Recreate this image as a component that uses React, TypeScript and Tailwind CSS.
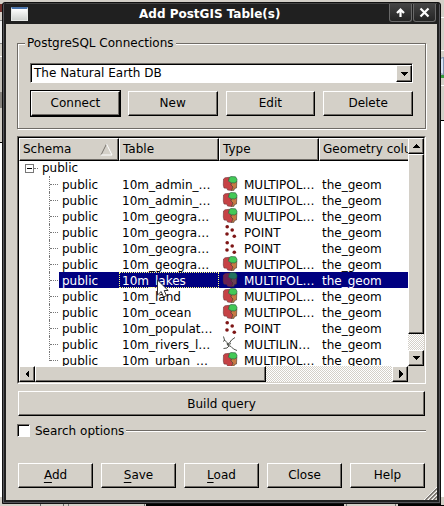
import React from "react";
import type { ReactNode } from "react";

const raised =
  "border border-t-white border-l-white border-r-black border-b-black shadow-[inset_-1px_-1px_0_#6f6b66]";
const dither =
  "bg-[repeating-conic-gradient(#d4d0c8_0%_25%,#ffffff_0%_50%)] bg-[length:2px_2px]";

function Button({ children, className = "" }: { children: ReactNode; className?: string }) {
  return (
    <button className={`flex items-center justify-center bg-[#d4d0c8] ${raised} ${className}`}>
      <span>{children}</span>
    </button>
  );
}

function Mnemonic({ label }: { label: string }) {
  return (
    <>
      <span className="underline decoration-1 underline-offset-[3px]">{label[0]}</span>
      {label.slice(1)}
    </>
  );
}

function Arrow({ dir }: { dir: "up" | "down" | "left" | "right" }) {
  const points = {
    up: "2,8 10,8 6,4",
    down: "2,4 10,4 6,8",
    left: "8,2 8,10 4,6",
    right: "5,2 5,10 9,6",
  }[dir];
  return (
    <svg width="12" height="12" viewBox="0 0 12 12" shapeRendering="crispEdges">
      <polygon points={points} />
    </svg>
  );
}

function ScrollButton({ dir }: { dir: "up" | "down" | "left" | "right" }) {
  return (
    <div className={`flex size-4 shrink-0 items-center justify-center bg-[#d4d0c8] ${raised}`}>
      <Arrow dir={dir} />
    </div>
  );
}

function PolygonIcon({ selected }: { selected: boolean }) {
  const red = selected ? "#6b2052" : "#c64245";
  const green = selected ? "#237360" : "#43c957";
  const brown = selected ? "#6b4056" : "#c77a43";
  return (
    <svg width="16" height="16" viewBox="0 0 16 16">
      <path d="M1.500 3 3 1.800 7.500 1.300 6.500 5.200 9.500 6.800 9 9 11 11 9.500 14.500 5.500 14 5 12.300 2 12 1.300 9Z" fill={red} stroke="#6b3438" strokeWidth=".6" />
      <path d="M9.500 6.800 14.800 5.200 14.500 12 12.500 12.500 12 14.300 9.500 14.500 11 11 9 9Z" fill={brown} stroke="#453329" strokeWidth=".6" />
      <path d="M7.500 1.300 9 .5 13.500 .8 15 3.200 14.800 5.500 12.500 7 9.500 6.800 6.500 5.200Z" fill={green} stroke="#28563a" strokeWidth=".6" />
    </svg>
  );
}

function PointIcon() {
  return (
    <svg width="16" height="16" viewBox="0 0 16 16" fill="#7e1515">
      <circle cx="5.200" cy="2.700" r="1.800" />
      <circle cx="10.200" cy="6" r="1.800" />
      <circle cx="5" cy="10" r="1.800" />
      <circle cx="12.300" cy="12.300" r="1.800" />
    </svg>
  );
}

function LineIcon() {
  return (
    <svg width="16" height="16" viewBox="0 0 16 16" fill="none" stroke="#3c4039" strokeWidth=".9">
      <path d="M1.500 .5 2.500 4 5 6.500 5.500 9 9 10.500 11.500 13 15 14.500M5 8 7.500 7 9.500 4 13 1.500M7 10 5 12 1.500 12.500M5.500 9 9 7.500M3 4 1 5.500" />
    </svg>
  );
}

const rows: [string, "POINT" | "MULTIPOL…" | "MULTILIN…"][] = [
  ["10m_admin_…", "MULTIPOL…"],
  ["10m_admin_…", "MULTIPOL…"],
  ["10m_geogra…", "MULTIPOL…"],
  ["10m_geogra…", "POINT"],
  ["10m_geogra…", "POINT"],
  ["10m_geogra…", "MULTIPOL…"],
  ["10m_lakes", "MULTIPOL…"],
  ["10m_land", "MULTIPOL…"],
  ["10m_ocean", "MULTIPOL…"],
  ["10m_populat…", "POINT"],
  ["10m_rivers_l…", "MULTILIN…"],
  ["10m_urban_…", "MULTIPOL…"],
];

function TreeRow({ index }: { index: number }) {
  const [table, type] = rows[index];
  const selected = index === 6;
  const last = index === rows.length - 1;
  return (
    <div className="flex h-4 shrink-0 leading-[18px]">
      <div className="flex w-10 shrink-0 pl-[30px]">
        <div className={`w-px border-l border-dotted border-[#777] ${last ? "h-[9px]" : "h-4"}`} />
        <div className="mt-2 h-px w-2 border-t border-dotted border-[#777]" />
      </div>
      <div className={`flex flex-1 ${selected ? "bg-[#000080] text-white" : ""}`}>
        <div className="w-[60px] shrink-0 pl-[3px]">public</div>
        <div className={`w-[100px] shrink-0 whitespace-nowrap pl-[3px] ${selected ? "outline-1 -outline-offset-1 outline-dotted outline-[#ffff7f]" : ""}`}>
          {table}
        </div>
        <div className="flex w-[100px] shrink-0 gap-[6px] pl-[3px]">
          {type === "POINT" ? <PointIcon /> : type === "MULTILIN…" ? <LineIcon /> : <PolygonIcon selected={selected} />}
          <span>{type}</span>
        </div>
        <div className="pl-[3px]">the_geom</div>
      </div>
    </div>
  );
}

function HeaderCell({ children, className = "w-[100px]" }: { children: ReactNode; className?: string }) {
  return (
    <div className={`flex shrink-0 items-center justify-between overflow-hidden whitespace-nowrap pl-[3px] ${raised} ${className}`}>
      {children}
    </div>
  );
}

function TitleButton({ children }: { children: ReactNode }) {
  return (
    <div className="flex h-[18px] w-[23px] items-center justify-center rounded-b-[3px] border border-t-0 border-[#696969] bg-gradient-to-b from-[#444] to-[#252525]">
      {children}
    </div>
  );
}

function Desktop() {
  return (
    <div className="flex h-[506px] flex-col bg-[#d4d0c8]">
      <div className="flex flex-1 justify-between">
        <div className="flex w-[3px] flex-col">
          <div className="mt-1 h-2 bg-[#6d302b]" />
          <div className="mt-2 h-6 border-y border-[#888] bg-[#eee]" />
          <div className="mt-3 h-9 border-t border-white bg-[#c4c0b9]" />
          <div className="h-4 bg-[#88847f]" />
          <div className="mt-2 h-[27px] border-b border-black" />
          <div className="flex-1 bg-white" />
        </div>
        <div className="flex w-[7px] flex-col">
          <div className="mt-[17px] h-[34px] border-y border-white" />
          <div className="mt-[6px] h-[18px] rounded-l-full border border-[#8295b1] bg-[#d7e3f4]" />
          <div className="h-[3px] bg-[#379b3f]" />
          <div className="mt-[7px] h-[35px] border-t border-white" />
          <div className="flex-1 border-t border-black bg-white" />
        </div>
      </div>
      <div className="flex h-[9px]">
        <div className="w-10" />
        <div className="w-[24px] border-x border-[#666]" />
        <div className="ml-1 w-[77px] border-x border-[#777]" />
        <div className="ml-px w-[198px] bg-black" />
        <div className="ml-[2px] w-[50px] border-x border-[#777]" />
        <div className="ml-[2px] flex-1 bg-black" />
        <div className="w-[3px] border-b border-black bg-[#d4d0c8]" />
      </div>
    </div>
  );
}

export default function App() {
  return (
    <div className="relative h-[506px] w-[444px] overflow-hidden text-[12px] leading-[15px] text-black [font-family:'DejaVu_Sans',sans-serif]">
      <Desktop />
      <main className="absolute left-[2px] top-[2px] flex h-[502px] w-[439px] flex-col rounded-t-[3px] border border-[#111] bg-[#202020] px-[3px] pb-[3px] shadow-[inset_1px_0_0_#55555a,inset_-1px_-1px_0_#55555a]">
        <header className="flex h-[21px] shrink-0 items-start border-t border-[#444]">
          <div className="ml-[5px] mt-[3px] h-[14px] w-[17px] border border-t-2 border-[#e6e8e6] border-t-[#4b75ad] bg-gradient-to-b from-white to-[#cfd2cf]" />
          <h1 className="flex-1 pl-[111px] pt-[3px] text-[12px] font-bold leading-[15px] text-white">Add PostGIS Table(s)</h1>
          <div className="mr-px flex gap-px">
            <TitleButton>
              <svg width="11" height="11" viewBox="0 0 11 11" fill="none" stroke="white" strokeWidth="2.200"><path d="M5.500 10V2.500M2 6 5.500 2.500 9 6" /></svg>
            </TitleButton>
            <TitleButton>
              <svg width="11" height="11" viewBox="0 0 11 11" stroke="white" strokeWidth="2.200"><path d="m1.500 1.500 8 8m0-8-8 8" /></svg>
            </TitleButton>
          </div>
        </header>
        <div className="relative flex flex-1 flex-col bg-[#d4d0c8] px-[11px] pt-[12px]">
          <fieldset className="h-[93px] border border-[#6f6b66] px-3 shadow-[1px_1px_0_white,inset_1px_1px_0_white]">
            <legend className="-ml-[5px] bg-[#d4d0c8] px-[2px]">PostgreSQL Connections</legend>
            <div className="mt-[12px] flex h-5 border border-[#6f6b66] border-r-white border-b-white bg-white shadow-[inset_1px_1px_0_black]">
              <span className="flex-1 pl-[3px] leading-[19px]">The Natural Earth DB</span>
              <div className={`mt-px flex w-4 items-center justify-center bg-[#d4d0c8] ${raised}`}><Arrow dir="down" /></div>
            </div>
            <div className="mt-[7px] grid grid-cols-4 gap-2">
              <div className="-mr-px border border-black"><Button className="h-[25px] w-full">Connect</Button></div>
              <Button className="mt-px h-[25px]">New</Button>
              <Button className="mt-px h-[25px]">Edit</Button>
              <Button className="mt-px h-[25px]">Delete</Button>
            </div>
          </fieldset>
          <section className="mt-[7px] flex h-[248px] w-[409px] shrink-0 flex-col border border-[#6f6b66] border-r-white border-b-white">
            <div className="flex flex-1 flex-col border border-black border-r-[#d4d0c8] border-b-[#d4d0c8]">
              <div className="flex h-[228px]">
                <div className="flex w-[389px] flex-col overflow-hidden bg-white">
                  <div className="flex h-[23px] shrink-0 bg-[#d4d0c8]">
                    <HeaderCell>
                      Schema
                      <svg className="mr-[5px]" width="13" height="13" viewBox="0 0 13 13" fill="none"><path d="M1 12 6.500 1" stroke="#77736d" /><path d="M1 12h11L6.500 1" stroke="white" /></svg>
                    </HeaderCell>
                    <HeaderCell>Table</HeaderCell>
                    <HeaderCell>Type</HeaderCell>
                    <HeaderCell className="w-[110px]">Geometry column</HeaderCell>
                  </div>
                  <div className="-mt-px flex h-4 shrink-0 items-center">
                    <div className="ml-[6px] flex size-[9px] items-center justify-center border border-[#777]"><div className="h-px w-[5px] bg-black" /></div>
                    <div className="w-1 border-t border-dotted border-[#777]" />
                    <span className="ml-1 leading-[18px]">public</span>
                  </div>
                  {rows.map((_, index) => <TreeRow key={index} index={index} />)}
                </div>
                <div className={`flex w-4 flex-col ${dither}`}>
                  <ScrollButton dir="up" />
                  <div className={`h-[180px] bg-[#d4d0c8] ${raised}`} />
                  <div className="flex-1" />
                  <ScrollButton dir="down" />
                </div>
              </div>
              <div className={`flex h-4 w-[389px] ${dither}`}>
                <ScrollButton dir="left" />
                <div className={`w-[231px] bg-[#d4d0c8] ${raised}`} />
                <div className="flex-1" />
                <ScrollButton dir="right" />
              </div>
            </div>
          </section>
          <Button className="ml-px mt-[7px] h-[25px] w-[407px] shrink-0 pt-px">Build query</Button>
          <div className="mt-2 flex h-[13px] items-center">
            <div className="size-[13px] border border-[#6f6b66] border-r-white border-b-white bg-white shadow-[inset_1px_1px_0_black]" />
            <span className="ml-[5px] pt-[2px]">Search options</span>
            <div className="ml-[2px] h-[2px] flex-1 border-t border-[#6f6b66] bg-white" />
          </div>
          <div className="ml-px mt-[26px] flex gap-2">
            <Button className="h-[25px] w-[75px]"><Mnemonic label="Add" /></Button>
            <Button className="h-[25px] w-[75px]"><Mnemonic label="Save" /></Button>
            <Button className="h-[25px] w-[75px]"><Mnemonic label="Load" /></Button>
            <Button className="h-[25px] w-[75px]">Close</Button>
            <Button className="h-[25px] w-[75px]">Help</Button>
          </div>
          <svg className="absolute bottom-0 right-0" width="13" height="13" viewBox="0 0 13 13"><path d="M0 13 13 0M4 13l9-9M8 13l5-5" stroke="white" /><path d="M1.500 13 13 1.500M5.500 13 13 5.500M9.500 13 13 9.500" stroke="#6f6b66" strokeWidth="1.300" /></svg>
        </div>
      </main>
      <svg className="absolute left-[156px] top-[279px]" width="15" height="21" viewBox="0 0 15 21"><path d="M1.500 1v15l3.700-3.500L7.500 18l3-1.300L8.200 11.500h4Z" fill="white" stroke="#333" /></svg>
    </div>
  );
}
